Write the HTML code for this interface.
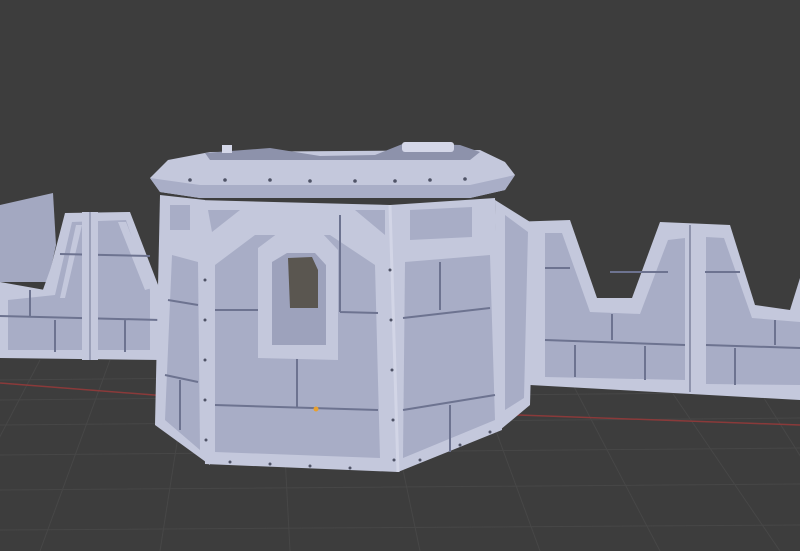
<!DOCTYPE html>
<html><head><style>
html,body{margin:0;padding:0;background:#3d3d3d;width:800px;height:551px;overflow:hidden}
svg{display:block}
</style></head><body>
<svg width="800" height="551" viewBox="0 0 800 551" xmlns="http://www.w3.org/2000/svg">
<rect width="800" height="551" fill="#3d3d3d"/>
<g stroke="#474747" stroke-width="1" fill="none">
<path d="M0 380 L800 372 M0 400 L800 392 M0 425 L800 418 M0 455 L800 448 M0 490 L800 484 M0 530 L800 525"/>
<path d="M40 360 L-60 551 M110 360 L40 551 M190 360 L160 551 M280 360 L290 551 M380 360 L420 551 M470 360 L540 551 M560 360 L660 551 M650 360 L780 551 M740 360 L860 551"/>
</g>
<path d="M0 383 L320 408 L800 425" stroke="#8a3a3a" stroke-width="1.5" fill="none"/>
<!-- left wall -->
<g>
<polygon points="0,205 53,193 56,245 48,282 0,282" fill="#a3a8c1"/>
<polygon points="0,282 45,290 65,213 130,212 160,290 162,360 0,358" fill="#c4c8dc"/>
<polygon points="0,295 40,298 68,220 78,222 55,292 0,300" fill="#c4c8dc"/>
<polygon points="72,222 126,220 150,290 150,350 8,350 8,300 55,295" fill="#a8adc6"/>
<polygon points="60,298 76,225 82,225 65,298" fill="#c4c8dc"/>
<polygon points="118,222 126,222 152,288 145,290" fill="#c4c8dc"/>
<path d="M0 316 L160 320 M60 254 L150 256 M55 320 L55 352 M125 320 L125 352 M30 290 L30 316" stroke="#6d7390" stroke-width="2"/>
<rect x="82" y="212" width="16" height="148" fill="#c4c8dc"/>
<line x1="90" y1="212" x2="90" y2="360" stroke="#8f94ad" stroke-width="1.5"/>
</g>
<!-- right wall -->
<g>
<polygon points="510,222 570,220 597,298 632,298 660,222 730,225 755,305 790,310 800,278 800,400 530,385 520,235" fill="#c4c8dc"/>
<polygon points="545,233 562,233 590,312 640,314 668,240 685,238 685,380 545,377" fill="#a8adc6"/>
<polygon points="706,237 724,238 752,318 800,322 800,385 706,384" fill="#a8adc6"/>
<path d="M545 268 L570 268 M545 340 L685 345 M610 272 L668 272 M706 345 L800 348 M612 314 L612 340 M575 345 L575 377 M645 346 L645 380 M735 348 L735 385 M705 272 L740 272 M775 320 L775 345" stroke="#6d7390" stroke-width="2"/>
<line x1="690" y1="225" x2="690" y2="392" stroke="#8f94ad" stroke-width="2"/>
</g>
<!-- tower right side panel -->
<polygon points="495,200 535,225 530,405 500,430" fill="#c4c8dc"/>
<polygon points="505,215 528,232 524,398 505,410" fill="#a8adc6"/>
<!-- tower left face -->
<polygon points="160,195 205,200 210,465 155,425" fill="#c4c8dc"/>
<polygon points="172,255 198,262 200,450 165,420" fill="#a8adc6"/>
<rect x="170" y="205" width="20" height="25" fill="#a8adc6"/>
<path d="M168 300 L198 305 M165 375 L198 382 M180 380 L180 430" stroke="#6d7390" stroke-width="2"/>
<!-- front face -->
<polygon points="198,200 390,205 398,472 205,464" fill="#c4c8dc"/>
<polygon points="215,265 255,235 330,235 375,265 380,458 215,452" fill="#a8adc6"/>
<polygon points="208,210 240,210 212,232" fill="#a8adc6"/>
<polygon points="355,210 385,210 385,235" fill="#a8adc6"/>
<path d="M215 310 L258 310 M340 312 L378 313 M215 405 L378 410 M297 355 L297 408 M340 215 L340 312" stroke="#6d7390" stroke-width="2"/>
<!-- window -->
<polygon points="258,248 278,233 322,233 338,250 338,360 258,358" fill="#c4c8dc"/>
<polygon points="272,262 287,253 315,253 326,265 326,345 272,345" fill="#9da2bc"/>
<polygon points="288,258 312,257 318,270 318,308 290,308" fill="#5a5650"/>
<!-- right face -->
<polygon points="390,205 495,198 502,430 398,472" fill="#c4c8dc"/>
<polygon points="405,262 490,255 495,420 403,458" fill="#a8adc6"/>
<polygon points="410,210 472,207 472,237 410,240" fill="#a8adc6"/>
<path d="M403 318 L490 308 M403 410 L495 395 M440 262 L440 310 M450 405 L450 452" stroke="#6d7390" stroke-width="2"/>
<line x1="390" y1="205" x2="398" y2="472" stroke="#d2d5e6" stroke-width="3"/>
<!-- roof -->
<polygon points="150,178 168,160 210,152 480,150 505,162 515,175 505,190 470,198 200,198 160,192" fill="#c4c8dc"/>
<polygon points="150,178 160,192 200,198 470,198 505,190 515,175 470,185 200,185" fill="#a9aec7"/>
<polygon points="205,153 270,148 320,156 375,155 405,143 460,145 480,152 470,160 210,160" fill="#8d92ab"/>
<rect x="402" y="142" width="52" height="10" rx="3" fill="#d4d7e8"/>
<rect x="222" y="145" width="10" height="8" fill="#d4d7e8"/>
<!-- rivets -->
<g fill="#4f5366">
<circle cx="190" cy="180" r="1.8"/><circle cx="225" cy="180" r="1.8"/><circle cx="270" cy="180" r="1.8"/><circle cx="310" cy="181" r="1.8"/><circle cx="355" cy="181" r="1.8"/><circle cx="395" cy="181" r="1.8"/><circle cx="430" cy="180" r="1.8"/><circle cx="465" cy="179" r="1.8"/>
<circle cx="205" cy="280" r="1.5"/><circle cx="205" cy="320" r="1.5"/><circle cx="205" cy="360" r="1.5"/><circle cx="205" cy="400" r="1.5"/><circle cx="206" cy="440" r="1.5"/>
<circle cx="390" cy="270" r="1.5"/><circle cx="391" cy="320" r="1.5"/><circle cx="392" cy="370" r="1.5"/><circle cx="393" cy="420" r="1.5"/><circle cx="394" cy="460" r="1.5"/>
<circle cx="230" cy="462" r="1.5"/><circle cx="270" cy="464" r="1.5"/><circle cx="310" cy="466" r="1.5"/><circle cx="350" cy="468" r="1.5"/>
<circle cx="420" cy="460" r="1.5"/><circle cx="460" cy="445" r="1.5"/><circle cx="490" cy="432" r="1.5"/>
</g>
<circle cx="316" cy="409" r="2.5" fill="#e8a030"/>
</svg>
</body></html>
